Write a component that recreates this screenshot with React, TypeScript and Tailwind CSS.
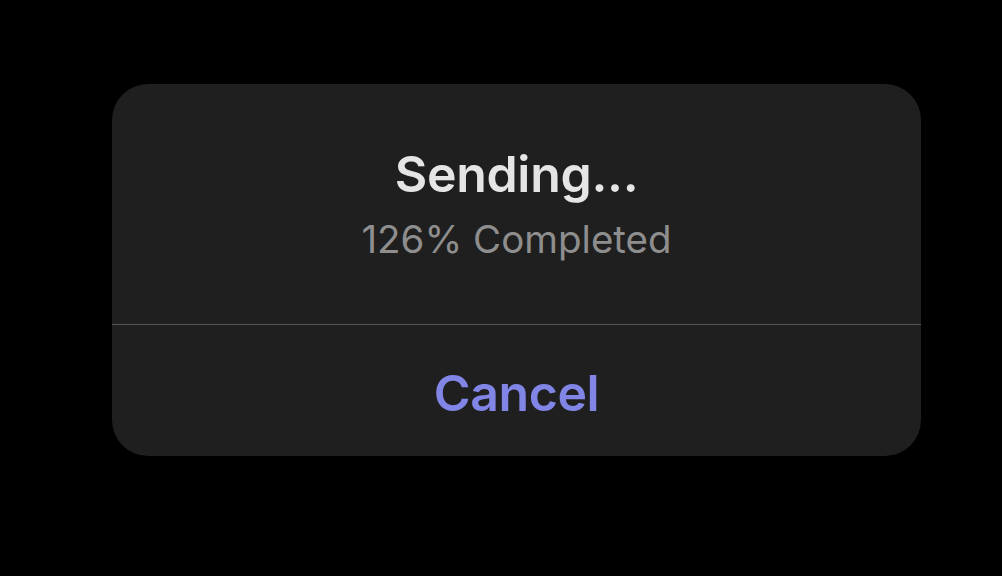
export default function App() {
  return (
    <div className="h-[576px] w-[1002px] bg-black pt-[84px] pl-[112px]" style={{ fontFamily: 'Inter, "Noto Sans", sans-serif' }}>
      <div className="w-[809px] h-[372px] rounded-[36px] bg-[#1f1f1f] flex flex-col overflow-hidden">
        <div className="h-[240px] flex flex-col items-center pt-[60px]">
          <div className="text-[50px] leading-[60px] font-semibold text-[#e5e5e5] tracking-[-0.3px]">Sending...</div>
          <div className="text-[38.5px] leading-[48px] mt-[11px] text-[#8e8e8e]">126% Completed</div>
        </div>
        <div className="h-px bg-[#545454]" />
        <div className="flex-1 flex items-center justify-center pt-[4px]">
          <span className="text-[50px] leading-[60px] font-semibold text-[#8085e6] tracking-[-0.4px]">Cancel</span>
        </div>
      </div>
    </div>
  );
}
